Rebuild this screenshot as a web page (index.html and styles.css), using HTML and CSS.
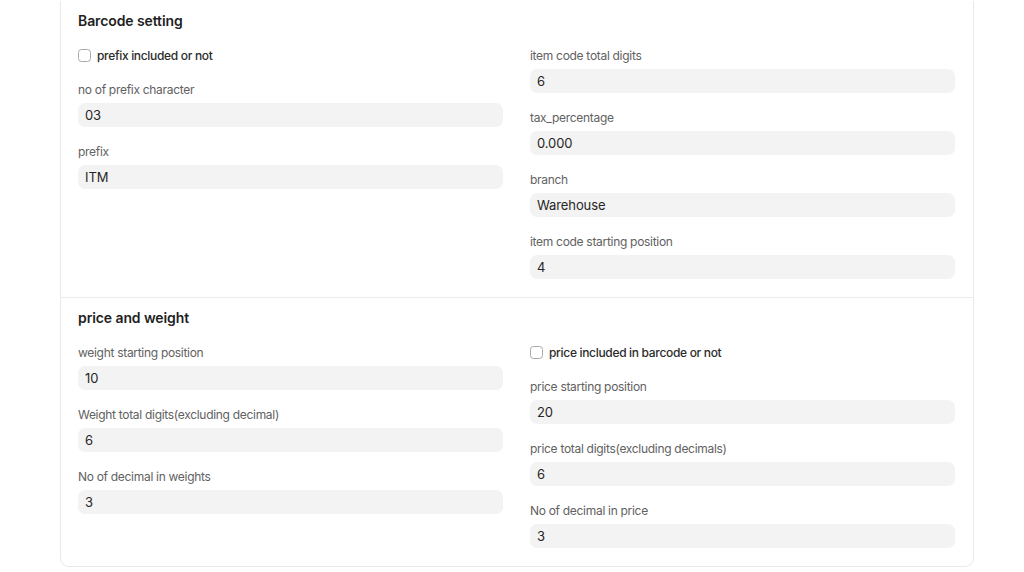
FILE: index.html
```html
<!DOCTYPE html>
<html>
<head>
<meta charset="utf-8">
<link rel="stylesheet" href="styles.css">
</head>
<body>
<div class="page">
  <div class="card">
    <section class="section">
      <h2 class="title">Barcode setting</h2>
      <div class="cols">
        <div class="col">
          <label class="check"><span class="box"></span><span>prefix included or not</span></label>
          <div class="field"><div class="label">no of prefix character</div><div class="input">03</div></div>
          <div class="field"><div class="label">prefix</div><div class="input">ITM</div></div>
        </div>
        <div class="col">
          <div class="field"><div class="label">item code total digits</div><div class="input">6</div></div>
          <div class="field"><div class="label">tax_percentage</div><div class="input">0.000</div></div>
          <div class="field"><div class="label">branch</div><div class="input">Warehouse</div></div>
          <div class="field"><div class="label">item code starting position</div><div class="input">4</div></div>
        </div>
      </div>
    </section>
    <section class="section">
      <h2 class="title">price and weight</h2>
      <div class="cols">
        <div class="col">
          <div class="field"><div class="label">weight starting position</div><div class="input">10</div></div>
          <div class="field"><div class="label">Weight total digits(excluding decimal)</div><div class="input">6</div></div>
          <div class="field"><div class="label">No of decimal in weights</div><div class="input">3</div></div>
        </div>
        <div class="col">
          <label class="check"><span class="box"></span><span>price included in barcode or not</span></label>
          <div class="field"><div class="label">price starting position</div><div class="input">20</div></div>
          <div class="field"><div class="label">price total digits(excluding decimals)</div><div class="input">6</div></div>
          <div class="field"><div class="label">No of decimal in price</div><div class="input">3</div></div>
        </div>
      </div>
    </section>
  </div>
</div>
</body>
</html>
```
FILE: styles.css
```css
* { box-sizing: border-box; }
html, body { margin: 0; padding: 0; background: #fff; }
body { font-family: Inter, "Noto Sans", sans-serif; color: #1f2328; }
.page { padding: 1px 51px 0 60px; width: 1024px; }
.card {
  width: 914px;
  border: 1px solid #e9e9e9;
  border-top: none;
  border-radius: 0 0 9px 9px;
}
.section { padding: 10px 17px 18px 17px; }
.section + .section { border-top: 1px solid #ececec; }
.title {
  margin: 0 0 16px 0;
  font-size: 14px;
  line-height: 20px;
  font-weight: 600;
  color: #1f1f1f;
  letter-spacing: -0.1px;
}
.cols { display: grid; grid-template-columns: 425px 425px; column-gap: 27px; }
.col { display: flex; flex-direction: column; gap: 16px; }
.check { display: flex; align-items: center; gap: 6px; height: 16px; margin-bottom: 2px; font-size: 12px; font-weight: 500; color: #2b2b2b; letter-spacing: -0.32px; }
.box { width: 13px; height: 13px; border: 1px solid #a8a8a8; border-radius: 3.5px; background: #fff; flex: none; }
.field { display: flex; flex-direction: column; gap: 5px; }
.label { font-size: 12px; line-height: 17px; color: #616161; letter-spacing: -0.3px; }
.input {
  height: 24px;
  background: #f3f3f3;
  border-radius: 7px;
  padding: 0 7px;
  font-size: 13px;
  line-height: 24px;
  color: #262626;
  letter-spacing: -0.1px;
}
```
